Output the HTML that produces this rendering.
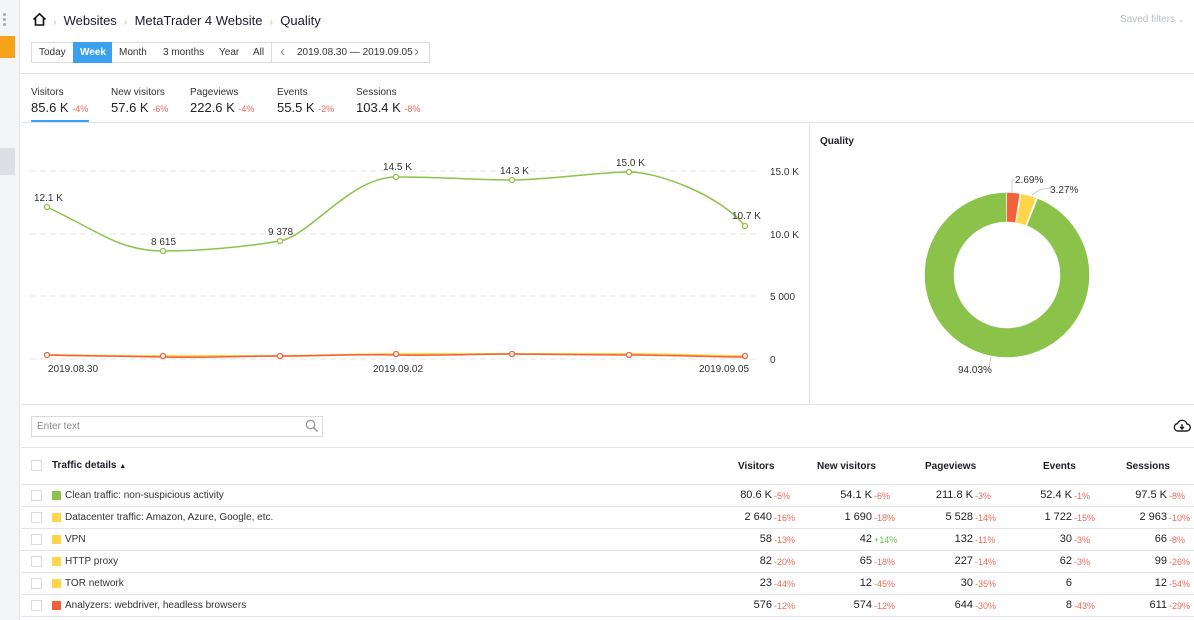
<!DOCTYPE html>
<html><head><meta charset="utf-8"><style>
*{margin:0;padding:0;box-sizing:border-box}
body{width:1194px;height:620px;overflow:hidden;background:#fff;font-family:"Liberation Sans",sans-serif;color:#222;position:relative;font-size:11px}
.a{position:absolute;white-space:nowrap}
.hl{position:absolute;height:1px;background:#e3e5e8}
.red{color:#f0685a;font-size:9px}
.grn{color:#6cbf4a;font-size:9px}
.cb{position:absolute;width:11px;height:11px;border:1px solid #d8dbe0;background:#fff}
.sq{position:absolute;width:9px;height:9px}
.n{position:absolute;width:0;white-space:nowrap}
.n b{position:absolute;right:0;font-weight:normal;font-size:11px;color:#222;white-space:nowrap}
.n i{position:absolute;left:2px;font-style:normal;top:2px;white-space:nowrap}
.th{position:absolute;font-weight:bold;font-size:10px;color:#1c1c2a;white-space:nowrap}
</style></head><body>
<div class="a" style="left:0;top:0;width:20px;height:620px;background:#f3f5f7;border-right:1px solid #e0e3e6"></div>
<div class="a" style="left:3px;top:13px;width:3px;height:3px;background:#aaa;border-radius:50%"></div>
<div class="a" style="left:3px;top:18px;width:3px;height:3px;background:#aaa;border-radius:50%"></div>
<div class="a" style="left:3px;top:23px;width:3px;height:3px;background:#aaa;border-radius:50%"></div>
<div class="a" style="left:0;top:36px;width:15px;height:22px;background:#f7a21b"></div>
<div class="a" style="left:0;top:148px;width:15px;height:27px;background:#dcdfe3"></div>

<svg class="a" style="left:32px;top:12px" width="15" height="15" viewBox="0 0 15 15"><path d="M1.5 7.5 L7.5 1.8 L13.5 7.5 M3.5 6 V13 H11.5 V6" fill="none" stroke="#111" stroke-width="1.6"/></svg>
<div class="a" style="left:53px;top:13px;font-size:13px;color:#1a1a30"><span style="color:#bbb;font-size:10px">›</span>&nbsp; Websites &nbsp;<span style="color:#bbb;font-size:10px">›</span>&nbsp; MetaTrader 4 Website &nbsp;<span style="color:#bbb;font-size:10px">›</span>&nbsp; Quality</div>
<div class="a" style="left:1120px;top:14px;font-size:10px;color:#b8bec8">Saved filters <span style="font-size:8px">⌄</span></div>

<div class="a" style="left:31px;top:42px;width:399px;height:21px;border:1px solid #d8dbe0"></div>
<div class="a" style="left:73px;top:42px;width:39px;height:21px;background:#3aa0f0"></div>
<div class="a" style="left:271px;top:42px;width:1px;height:21px;background:#d8dbe0"></div>
<div class="a" style="left:39px;top:47px;font-size:10px;color:#333">Today</div>
<div class="a" style="left:80px;top:47px;font-size:10px;color:#fff;font-weight:bold">Week</div>
<div class="a" style="left:119px;top:47px;font-size:10px;color:#333">Month</div>
<div class="a" style="left:163px;top:47px;font-size:10px;color:#333">3 months</div>
<div class="a" style="left:219px;top:47px;font-size:10px;color:#333">Year</div>
<div class="a" style="left:253px;top:47px;font-size:10px;color:#333">All</div>
<div class="a" style="left:280px;top:43px;font-size:15px;color:#888">‹</div>
<div class="a" style="left:297px;top:47px;font-size:10px;color:#333">2019.08.30 — 2019.09.05</div>
<div class="a" style="left:414px;top:43px;font-size:15px;color:#888">›</div>
<div class="hl" style="left:21px;top:73px;width:1173px"></div>

<div class="a" style="left:31px;top:87px;font-size:10px;color:#333">Visitors</div>
<div class="a" style="left:31px;top:100px;font-size:13px">85.6 K <span class="red">-4%</span></div>
<div class="a" style="left:111px;top:87px;font-size:10px;color:#333">New visitors</div>
<div class="a" style="left:111px;top:100px;font-size:13px">57.6 K <span class="red">-6%</span></div>
<div class="a" style="left:190px;top:87px;font-size:10px;color:#333">Pageviews</div>
<div class="a" style="left:190px;top:100px;font-size:13px">222.6 K <span class="red">-4%</span></div>
<div class="a" style="left:277px;top:87px;font-size:10px;color:#333">Events</div>
<div class="a" style="left:277px;top:100px;font-size:13px">55.5 K <span class="red">-2%</span></div>
<div class="a" style="left:356px;top:87px;font-size:10px;color:#333">Sessions</div>
<div class="a" style="left:356px;top:100px;font-size:13px">103.4 K <span class="red">-8%</span></div>
<div class="a" style="left:31px;top:120px;width:58px;height:3px;background:#3aa0f0"></div>
<div class="hl" style="left:21px;top:122px;width:1173px"></div>

<svg class="a" style="left:0;top:0" width="810" height="404">
<g stroke="#e6e6e6" stroke-dasharray="6,4" stroke-width="1">
<line x1="30" y1="171" x2="760" y2="171"/><line x1="30" y1="234" x2="760" y2="234"/><line x1="30" y1="296" x2="760" y2="296"/><line x1="30" y1="359" x2="760" y2="359"/></g>
<path d="M47 355 C90 356,120 356,163 356 S240 356,280 356 S350 354,396 354 S470 354,512 354 S590 354,629 354 S710 356,745 356" fill="none" stroke="#ffd54a" stroke-width="2"/>
<path d="M47 355 C90 356,120 356,163 357 S240 356,280 356 S350 354,396 355 S470 354,512 354 S590 355,629 355 S710 357,745 357" fill="none" stroke="#f4603a" stroke-width="1.5"/>
<g fill="#fff" stroke="#f4603a" stroke-width="1.3">
<circle cx="47" cy="355" r="2.5"/><circle cx="163" cy="356" r="2.5"/><circle cx="280" cy="356" r="2.5"/><circle cx="396" cy="354" r="2.5"/><circle cx="512" cy="354" r="2.5"/><circle cx="629" cy="355" r="2.5"/><circle cx="745" cy="356" r="2.5"/></g>
<path d="M47 207 C100 232,120 251,163 251 S250 246,280 241 S350 177,396 177 S480 180,512 180 S600 172,629 172 S720 195,745 226" fill="none" stroke="#8bc34a" stroke-width="1.5"/>
<g fill="#fff" stroke="#8bc34a" stroke-width="1.3">
<circle cx="47" cy="207" r="2.5"/><circle cx="163" cy="251" r="2.5"/><circle cx="280" cy="241" r="2.5"/><circle cx="396" cy="177" r="2.5"/><circle cx="512" cy="180" r="2.5"/><circle cx="629" cy="172" r="2.5"/><circle cx="745" cy="226" r="2.5"/></g>
<g font-family="Liberation Sans" font-size="10" fill="#333">
<text x="34" y="201">12.1 K</text><text x="151" y="245">8 615</text><text x="268" y="235">9 378</text><text x="383" y="170">14.5 K</text><text x="500" y="174">14.3 K</text><text x="616" y="166">15.0 K</text><text x="732" y="219">10.7 K</text>
<text x="770" y="175">15.0 K</text><text x="770" y="238">10.0 K</text><text x="770" y="300">5 000</text><text x="770" y="363">0</text>
<text x="48" y="372">2019.08.30</text><text x="373" y="372">2019.09.02</text><text x="699" y="372">2019.09.05</text></g>
</svg>
<div class="a" style="left:809px;top:123px;width:1px;height:281px;background:#e3e5e8"></div>
<div class="a" style="left:820px;top:136px;font-size:10px;font-weight:bold;color:#1c1c2a">Quality</div>

<svg class="a" style="left:810px;top:125px" width="384" height="260">
<g transform="translate(197,150) rotate(-90)">
<circle r="67.75" fill="none" stroke="#8bc34a" stroke-width="29" stroke-dasharray="398.8 426" stroke-dashoffset="-26"/>
<circle r="67.75" fill="none" stroke="#f4603a" stroke-width="29" stroke-dasharray="10.4 426" stroke-dashoffset="0"/>
<circle r="67.75" fill="none" stroke="#ffd54a" stroke-width="29" stroke-dasharray="12.4 426" stroke-dashoffset="-11.9"/>
</g>
<path d="M202 68 L202 55 L205 55" fill="none" stroke="#ccc"/>
<path d="M222 70 Q230 63 242 63" fill="none" stroke="#ccc"/>
<path d="M181 232 L179 242" fill="none" stroke="#ccc"/>
<g font-family="Liberation Sans" font-size="10" fill="#333"><text x="205" y="58">2.69%</text><text x="240" y="68">3.27%</text><text x="148" y="248">94.03%</text></g>
</svg>
<div class="hl" style="left:21px;top:404px;width:1173px"></div>

<div class="a" style="left:31px;top:416px;width:292px;height:21px;border:1px solid #d8dbe0"></div>
<div class="a" style="left:37px;top:421px;font-size:10px;color:#888">Enter text</div>
<svg class="a" style="left:305px;top:419px" width="14" height="14"><circle cx="5.5" cy="5.5" r="4.2" fill="none" stroke="#999" stroke-width="1.3"/><line x1="8.5" y1="8.5" x2="12.5" y2="12.5" stroke="#999" stroke-width="1.5"/></svg>
<svg class="a" style="left:1173px;top:419px" width="18" height="14" viewBox="0 0 18 14"><path d="M4.5 12 H13.5 A3.5 3.5 0 0 0 14 5 A5 5 0 0 0 4.5 4.5 A3.8 3.8 0 0 0 4.5 12 Z" fill="none" stroke="#222" stroke-width="1.4"/><path d="M9 5 V9.5 M7 7.8 L9 10 L11 7.8" fill="none" stroke="#222" stroke-width="1.4"/></svg>
<div class="hl" style="left:21px;top:447px;width:1173px"></div>

<div class="cb" style="left:31px;top:460px"></div>
<div class="th" style="left:52px;top:460px">Traffic details <span style="font-size:7px">▲</span></div>
<div class="th" style="left:738px;top:461px">Visitors</div>
<div class="th" style="left:817px;top:461px">New visitors</div>
<div class="th" style="left:925px;top:461px">Pageviews</div>
<div class="th" style="left:1043px;top:461px">Events</div>
<div class="th" style="left:1126px;top:461px">Sessions</div>
<div class="hl" style="left:21px;top:484px;width:1173px"></div>

<div id="rows"></div>
<script>
var rows=[
["#8bc34a","Clean traffic: non-suspicious activity",["80.6 K","-5%"],["54.1 K","-6%"],["211.8 K","-3%"],["52.4 K","-1%"],["97.5 K","-8%"]],
["#ffd54a","Datacenter traffic: Amazon, Azure, Google, etc.",["2 640","-16%"],["1 690","-18%"],["5 528","-14%"],["1 722","-15%"],["2 963","-10%"]],
["#ffd54a","VPN",["58","-13%"],["42","+14%"],["132","-11%"],["30","-3%"],["66","-8%"]],
["#ffd54a","HTTP proxy",["82","-20%"],["65","-18%"],["227","-14%"],["62","-3%"],["99","-26%"]],
["#ffd54a","TOR network",["23","-44%"],["12","-45%"],["30","-35%"],["6",""],["12","-54%"]],
["#f4603a","Analyzers: webdriver, headless browsers",["576","-12%"],["574","-12%"],["644","-30%"],["8","-43%"],["611","-29%"]]];
var ends=[772,872,973,1072,1167],h="";
rows.forEach(function(r,i){var y=484+i*22;
h+='<div class="cb" style="left:31px;top:'+(y+6)+'px"></div><div class="sq" style="left:52px;top:'+(y+7)+'px;background:'+r[0]+'"></div><div class="a" style="left:65px;top:'+(y+6)+'px;font-size:10px;color:#333">'+r[1]+'</div>';
for(var c=0;c<5;c++){var v=r[c+2];h+='<div class="n" style="left:'+ends[c]+'px;top:'+(y+5)+'px"><b>'+v[0]+'</b><i class="'+(v[1][0]=='+'?'grn':'red')+'">'+v[1]+'</i></div>';}
h+='<div class="hl" style="left:21px;top:'+(y+22)+'px;width:1173px"></div>';});
document.getElementById('rows').innerHTML=h;
</script>
</body></html>
